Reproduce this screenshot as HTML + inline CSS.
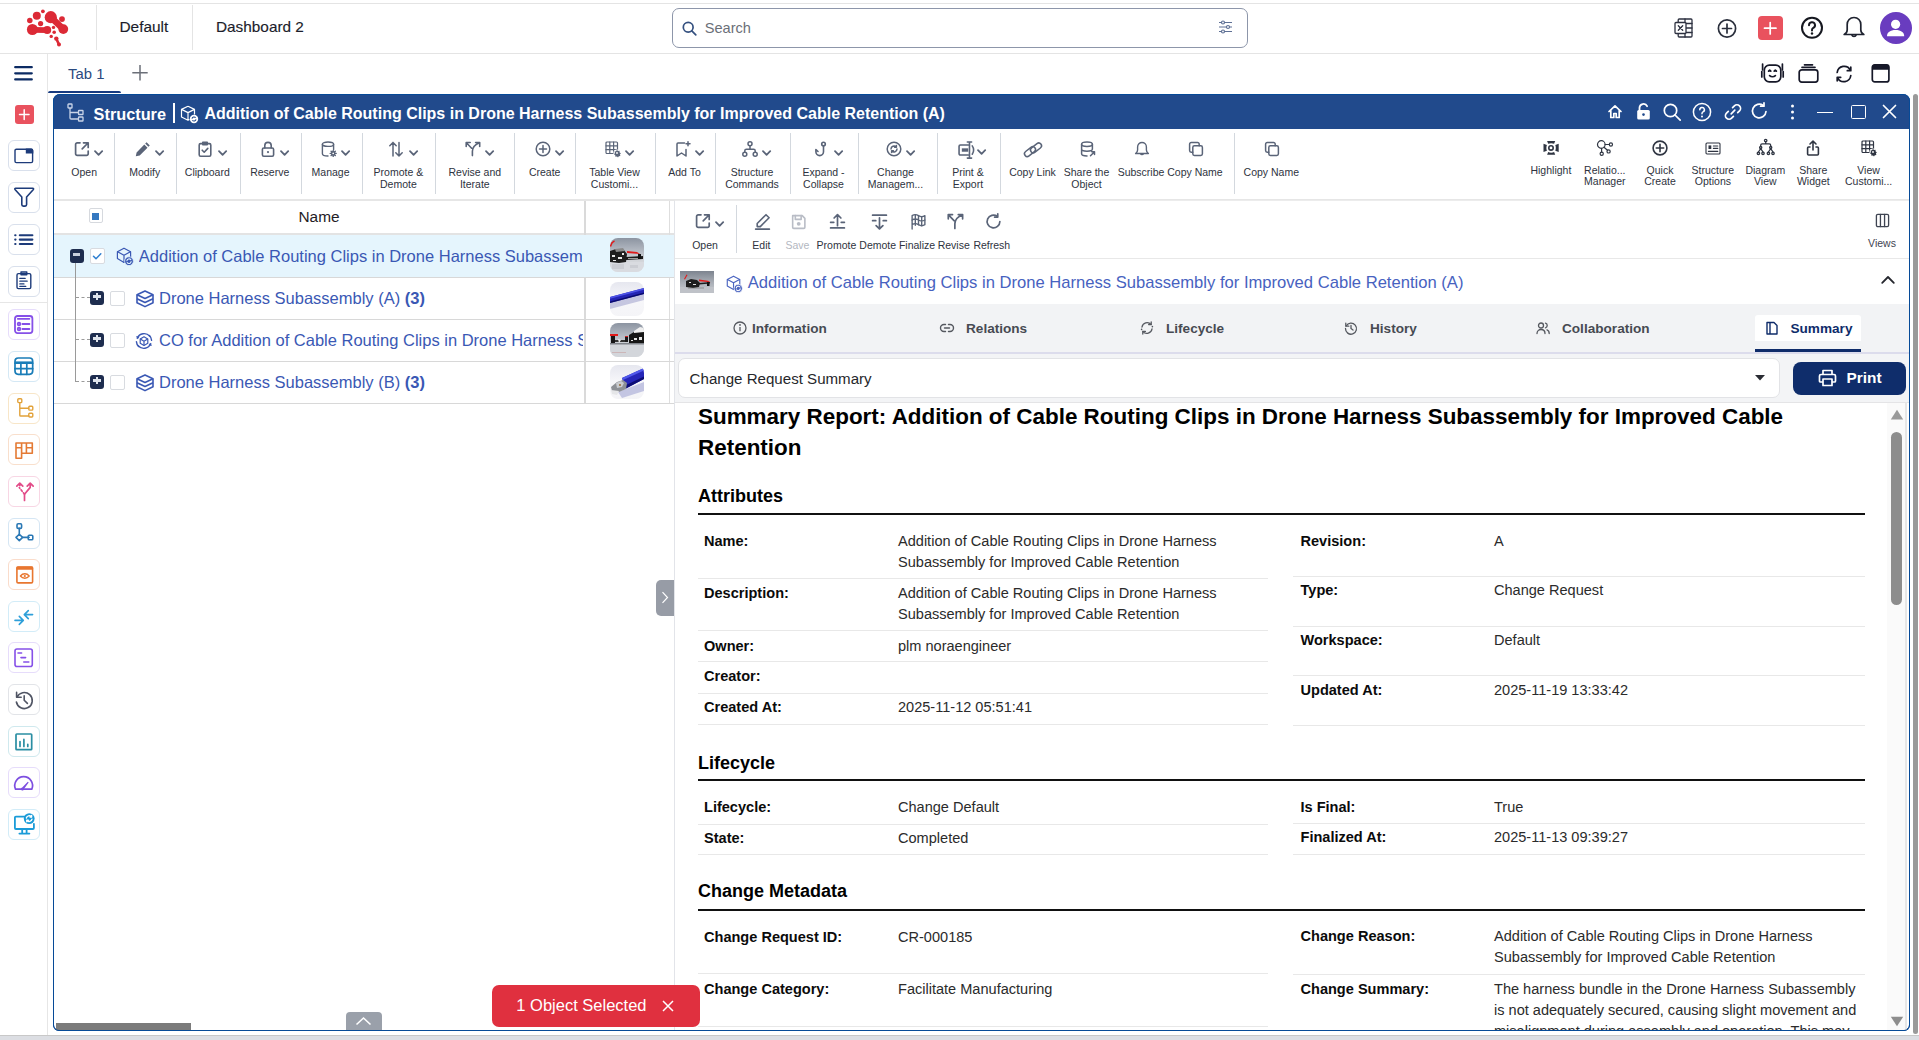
<!DOCTYPE html>
<html><head><meta charset="utf-8"><title>Structure</title>
<style>
*{box-sizing:border-box;margin:0;padding:0}
html,body{width:1919px;height:1040px;overflow:hidden;background:#fff}
body{position:relative;font-family:"Liberation Sans",sans-serif}
.t{position:absolute;line-height:1;white-space:nowrap}
.r{position:absolute;display:block}
svg.r{overflow:visible}
</style></head><body>

<div class="r" style="left:0px;top:3px;width:1919px;height:1px;background:#e4e4e4;"></div>
<div class="r" style="left:0px;top:53px;width:1919px;height:1px;background:#e4e4e4;"></div>
<svg class="r" style="left:0px;top:0px;" width="80" height="55" viewBox="0 0 80 55"><g fill="#dc2a36">
<circle cx="42.9" cy="11.3" r="1.9"/><circle cx="36.8" cy="15.7" r="4"/><circle cx="29.8" cy="20.4" r="2.75"/><circle cx="40.6" cy="23.6" r="2.6"/>
<circle cx="50.8" cy="17.2" r="6.1"/><circle cx="63.3" cy="29.1" r="4.9"/><path d="M50.8 17.2L63.3 29.1" stroke="#dc2a36" stroke-width="6.5"/>
<circle cx="62" cy="19.1" r="2.9"/>
<circle cx="32.4" cy="29.5" r="5.5"/><circle cx="47.2" cy="30.1" r="4"/><path d="M32.4 29.8L47.2 30.1" stroke="#dc2a36" stroke-width="5.8"/>
<circle cx="53.5" cy="27.4" r="1.7"/><circle cx="54.2" cy="32.2" r="1.8"/><circle cx="51.2" cy="36.4" r="1.7"/>
<circle cx="56.3" cy="38.6" r="2.2"/><circle cx="59" cy="44.5" r="2"/><path d="M56.3 38.6L59 44.5" stroke="#dc2a36" stroke-width="2.6"/>
</g></svg>
<div class="r" style="left:96px;top:5px;width:1px;height:45px;background:#e4e4e4;"></div>
<div class="r" style="left:192px;top:5px;width:1px;height:45px;background:#e4e4e4;"></div>
<div class="t" style="left:119.5px;top:18.6px;font-size:15.4px;font-weight:400;color:#1c1d2b;-webkit-text-stroke:0.15px #1c1d2b">Default</div>
<div class="t" style="left:216.0px;top:18.8px;font-size:15.35px;font-weight:400;color:#1c1d2b;-webkit-text-stroke:0.15px #1c1d2b">Dashboard 2</div>
<div class="r" style="left:672px;top:8px;width:576px;height:40px;border:1px solid #8d96aa;border-radius:7px"></div>
<svg class="r" style="left:682px;top:21px;" width="15" height="15" viewBox="0 0 15 15"><g fill="none" stroke="#34507f" stroke-width="1.7" stroke-linecap="round"><circle cx="6.2" cy="6.2" r="4.9"/><path d="M9.8 9.8l4 4"/></g></svg>
<div class="t" style="left:704.7px;top:21.1px;font-size:14.6px;font-weight:400;color:#6b6f78;">Search</div>
<svg class="r" style="left:1218px;top:20px;" width="15" height="14" viewBox="0 0 15 14"><g fill="none" stroke="#5e7095" stroke-width="1.2"><path d="M1 2.5h13M1 7h13M1 11.5h13"/><circle cx="5" cy="2.5" r="1.5" fill="#fff"/><circle cx="10" cy="7" r="1.5" fill="#fff"/><circle cx="5" cy="11.5" r="1.5" fill="#fff"/></g></svg>
<svg class="r" style="left:1674px;top:18px;" width="19" height="20" viewBox="0 0 19 20"><g fill="none" stroke="#2d3140" stroke-width="1.3" stroke-linecap="round" stroke-linejoin="round" >
<rect x="4.2" y="1" width="13.8" height="18" rx="1"/><path d="M4.2 5.5h13.8M4.2 10h13.8M4.2 14.5h13.8M11 1v18"/>
<rect x="1" y="4.5" width="11" height="11" rx="1" fill="#fff"/><path d="M4.3 7.8l4.4 4.4M8.7 7.8l-4.4 4.4"/></g></svg>
<svg class="r" style="left:1717px;top:19px;" width="20" height="20" viewBox="0 0 20 20"><g fill="none" stroke="#2a2f3c" stroke-width="1.7" stroke-linecap="round" stroke-linejoin="round" ><circle cx="10" cy="9.5" r="8.6"/><path d="M10 5v9M5.5 9.5h9"/></g></svg>
<div class="r" style="left:1758px;top:16px;width:24.5px;height:24px;background:#e9525e;border-radius:4px"></div>
<svg class="r" style="left:1758px;top:16px;" width="24" height="24" viewBox="0 0 24 24"><g fill="none" stroke="#fff" stroke-width="1.7" stroke-linecap="round" stroke-linejoin="round" ><path d="M12.2 6.5v11.5M6.5 12.2h11.5"/></g></svg>
<svg class="r" style="left:1800px;top:16px;" width="24" height="24" viewBox="0 0 24 24"><g fill="none" stroke="#161820" stroke-width="2" stroke-linecap="round" stroke-linejoin="round" ><circle cx="12" cy="11.8" r="10"/>
<path d="M9 9.2a3 3 0 1 1 4.3 2.7c-.9.5-1.3 1.1-1.3 2.1v.6"/></g><circle cx="12" cy="17.5" r="1.2" fill="#161820"/></svg>
<svg class="r" style="left:1842px;top:16px;" width="24" height="24" viewBox="0 0 24 24"><g fill="none" stroke="#1f2330" stroke-width="1.7" stroke-linecap="round" stroke-linejoin="round" ><path d="M12 1.5c-4 0-6.8 3-6.8 7v5.5c0 1.8-1.2 3.5-3 4.5h19.6c-1.8-1-3-2.7-3-4.5V8.5c0-4-2.8-7-6.8-7z"/>
<path d="M9.8 18.8a2.3 2.3 0 0 0 4.4 0"/></g></svg>
<div class="r" style="left:1880px;top:12px;width:31.5px;height:32px;background:#693cbf;border-radius:50%"></div>
<svg class="r" style="left:1880px;top:12px;" width="32" height="32" viewBox="0 0 32 32"><g fill="#fff"><circle cx="15.6" cy="12.3" r="4.6"/><path d="M7 24.2c0-3.7 3.3-6.1 8.6-6.1s8.6 2.4 8.6 6.1z"/></g></svg>
<svg class="r" style="left:1760px;top:63px;" width="25" height="20" viewBox="0 0 25 20"><g fill="none" stroke="#161828" stroke-width="1.7" stroke-linecap="round" stroke-linejoin="round" ><rect x="4.3" y="2.2" width="16.5" height="16.6" rx="5"/>
<path d="M1.8 8.5v5.5M23.2 8.5v5.5M2.6 1v6M22.4 1v6"/><path d="M8.6 8.2l1.1-1 1.1 1M14.2 8.2l1.1-1 1.1 1M9.6 12.6c1.6 1.5 4.2 1.5 5.8 0"/></g></svg>
<svg class="r" style="left:1798px;top:63px;" width="21" height="20" viewBox="0 0 21 20"><g fill="none" stroke="#161828" stroke-width="1.7" stroke-linecap="round" stroke-linejoin="round" ><rect x="1.2" y="6.8" width="18.6" height="12.3" rx="2.5"/><path d="M4 4.3h13M6.5 1.8h8"/></g></svg>
<svg class="r" style="left:1835px;top:65px;" width="18" height="18" viewBox="0 0 18 18"><g fill="none" stroke="#161828" stroke-width="1.7" stroke-linecap="round" stroke-linejoin="round" ><path d="M2.2 7.5A7 7 0 0 1 15.4 5.2M15.8 2.2v3.5h-3.5"/><path d="M15.8 10.5A7 7 0 0 1 2.6 12.8M2.2 15.8v-3.5h3.5"/></g></svg>
<svg class="r" style="left:1871px;top:63px;" width="19" height="20" viewBox="0 0 19 20"><g fill="none" stroke="#161828" stroke-width="1.7" stroke-linecap="round" stroke-linejoin="round" ><rect x="1.3" y="1.9" width="16.6" height="17" rx="2.5"/></g><path d="M1 4a2.6 2.6 0 0 1 2.6-2.6h12A2.6 2.6 0 0 1 18.2 4v2.8H1z" fill="#161828"/></svg>
<div class="r" style="left:47px;top:54px;width:1px;height:981px;background:#e6e6e6;"></div>
<div class="r" style="left:0px;top:302px;width:47px;height:1px;background:#e6e6e6;"></div>
<div class="r" style="left:8px;top:140.2px;width:31.5px;height:31px;border:1px solid #d9e0ec;border-radius:6px"></div>
<svg class="r" style="left:14.2px;top:148.4px;" width="19.8" height="15.8" viewBox="0 0 19.8 15.8"><g fill="none" stroke="#1d3b7a" stroke-width="1.4" stroke-linecap="round" stroke-linejoin="round" ><rect x="1" y="1.2" width="17.6" height="13.4" rx="1.4"/></g><path d="M11.8 0.5h5.6A1.9 1.9 0 0 1 19.3 2.4v3.2h-7.5z" fill="#1d3b7a"/></svg>
<div class="r" style="left:8px;top:182.2px;width:31.5px;height:31px;border:1px solid #d9e0ec;border-radius:6px"></div>
<svg class="r" style="left:13.9px;top:187.2px;" width="20.4" height="20.0" viewBox="0 0 20.4 20.0"><g fill="none" stroke="#1d3b7a" stroke-width="1.6" stroke-linecap="round" stroke-linejoin="round" ><path d="M1.6 1.2h17.2c.7 0 1 .8.6 1.3L12.6 10v7.6a1.5 1.5 0 0 1-1.5 1.5H9.3a1.5 1.5 0 0 1-1.5-1.5V10L1 2.5c-.4-.5-.1-1.3.6-1.3z"/></g></svg>
<div class="r" style="left:8px;top:224.2px;width:31.5px;height:31px;border:1px solid #d9e0ec;border-radius:6px"></div>
<svg class="r" style="left:14.4px;top:233.6px;" width="19.4" height="11.2" viewBox="0 0 19.4 11.2"><g stroke="#1d3b7a" stroke-width="2.1" stroke-linecap="round"><path d="M5.8 1.2h12.6M5.8 5.6h12.6M5.8 10h12.6M1.2 1.2h.3M1.2 5.6h.3M1.2 10h.3"/></g></svg>
<div class="r" style="left:8px;top:265.6px;width:31.5px;height:31px;border:1px solid #d9e0ec;border-radius:6px"></div>
<svg class="r" style="left:16.2px;top:271.2px;" width="15.8" height="18.4" viewBox="0 0 15.8 18.4"><g fill="none" stroke="#1d3b7a" stroke-width="1.4" stroke-linecap="round" stroke-linejoin="round" ><rect x="1" y="2.6" width="13.8" height="15" rx="1.4"/><path d="M5 1h5.8v2.8H5z"/><path d="M3.8 7.4h5.4M3.8 10.2h7.4M3.8 12.9h4.2M3.8 15.4h6" stroke-width="1.2"/></g></svg>
<div class="r" style="left:8px;top:309.3px;width:31.5px;height:31px;border:1px solid #e6dcfb;border-radius:6px"></div>
<svg class="r" style="left:14.4px;top:314.7px;" width="19.4" height="19.1" viewBox="0 0 19.4 19.1"><g fill="none" stroke="#8650e8" stroke-width="1.8" stroke-linecap="round" stroke-linejoin="round" ><rect x="1" y="1" width="17.4" height="17.1" rx="2.5"/><path d="M3.8 3.8h11.6M8.4 9h7M8.4 14h7"/><circle cx="5" cy="9" r="1.3"/><circle cx="5" cy="14" r="1.3"/></g></svg>
<div class="r" style="left:8px;top:351.0px;width:31.5px;height:31px;border:1px solid #d4e8f5;border-radius:6px"></div>
<svg class="r" style="left:14.3px;top:357.4px;" width="19.7" height="18.3" viewBox="0 0 19.7 18.3"><g fill="none" stroke="#1a7db8" stroke-width="1.7" stroke-linecap="round" stroke-linejoin="round" ><rect x="1" y="1" width="17.7" height="16.3" rx="3.2"/><path d="M1 6.2h17.7M1 11.7h17.7M6.9 6.2v11.1M12.8 6.2v11.1"/></g><path d="M1 5.2h17.7" stroke="#1a7db8" stroke-width="1.6"/></svg>
<div class="r" style="left:8px;top:392.6px;width:31.5px;height:31px;border:1px solid #f8e6c8;border-radius:6px"></div>
<svg class="r" style="left:16.6px;top:398.4px;" width="16.7" height="19.9" viewBox="0 0 16.7 19.9"><g fill="none" stroke="#e2a23a" stroke-width="1.4" stroke-linecap="round" stroke-linejoin="round" ><rect x=".8" y=".8" width="4" height="3.8" rx=".9"/><rect x="11.8" y="8.3" width="4" height="3.8" rx=".9"/><rect x="11.8" y="15.2" width="4" height="3.8" rx=".9"/><path d="M2.8 4.6v12.6c0 .5.3.8.8.8h8.2M2.8 10.2h9"/></g></svg>
<div class="r" style="left:8px;top:434.2px;width:31.5px;height:31px;border:1px solid #f9dfcc;border-radius:6px"></div>
<svg class="r" style="left:15px;top:441.6px;" width="18.3" height="17.0" viewBox="0 0 18.3 17.0"><g fill="none" stroke="#e47a34" stroke-width="1.6" stroke-linecap="round" stroke-linejoin="round" ><path d="M1 1h16.3v10.2H11.4V1M1 1v15.2h5.6V1M6.6 11.2h4.8M1 5.8h5.6M11.4 5.8h5.9"/></g></svg>
<div class="r" style="left:8px;top:475.9px;width:31.5px;height:31px;border:1px solid #f8d6e4;border-radius:6px"></div>
<svg class="r" style="left:16.4px;top:481.8px;" width="17.0" height="19.4" viewBox="0 0 17.0 19.4"><g fill="none" stroke="#e24b88" stroke-width="1.7" stroke-linecap="round" stroke-linejoin="round" ><path d="M8.5 18.4v-6.2L14.2 5.4M14.2 1v4.4M11.2 4.2l3-3 3 3"/><path d="M8.5 12.2L3.3 5.6" stroke-dasharray="1.8 2"/><path d="M.8 4.2l3-3 3 3M3.8 1.2v2.4"/></g></svg>
<div class="r" style="left:8px;top:517.5px;width:31.5px;height:31px;border:1px solid #d5e6f4;border-radius:6px"></div>
<svg class="r" style="left:14.4px;top:523.2px;" width="19.3" height="18.0" viewBox="0 0 19.3 18.0"><g fill="none" stroke="#2a78b5" stroke-width="1.6" stroke-linecap="round" stroke-linejoin="round" ><rect x="3" y=".8" width="4.6" height="4.6" rx="1.1"/><path d="M5.3 5.4v6.5M8.6 14.4h6.5"/><path d="M5.3 11.2l3.3 3.2-3.3 3.2-3.3-3.2z"/><rect x="14.2" y="12.2" width="4.6" height="4.6" rx="1.1"/></g></svg>
<div class="r" style="left:8px;top:559.1px;width:31.5px;height:31px;border:1px solid #fadccb;border-radius:6px"></div>
<svg class="r" style="left:15.5px;top:565.6px;" width="17.5" height="17.7" viewBox="0 0 17.5 17.7"><g fill="none" stroke="#e8762f" stroke-width="1.6" stroke-linecap="round" stroke-linejoin="round" ><rect x=".9" y="1" width="15.7" height="15.9" rx="1.2"/></g><rect x=".4" y=".5" width="16.7" height="3.2" rx="1" fill="#e8762f"/><g fill="none" stroke="#e8762f" stroke-width="1.3" stroke-linecap="round" stroke-linejoin="round" ><path d="M4.4 10c2.4-3 6.4-3 8.8 0-2.4 3-6.4 3-8.8 0z"/></g><circle cx="8.8" cy="10" r="1.1" fill="#e8762f"/></svg>
<div class="r" style="left:8px;top:600.7px;width:31.5px;height:31px;border:1px solid #d2ecf8;border-radius:6px"></div>
<svg class="r" style="left:14.4px;top:609.6px;" width="19.6" height="15.0" viewBox="0 0 19.6 15.0"><g fill="none" stroke="#2e9fd9" stroke-width="1.6" stroke-linecap="round" stroke-linejoin="round" ><path d="M1 10.4h8.2M5.3 6.4l4 4-4 4M18.6 4.6h-8.2M14.3 .6l-4 4 4 4"/></g></svg>
<div class="r" style="left:8px;top:642.3px;width:31.5px;height:31px;border:1px solid #e6dcfb;border-radius:6px"></div>
<svg class="r" style="left:14.4px;top:648px;" width="19.3" height="19.5" viewBox="0 0 19.3 19.5"><g fill="none" stroke="#8650e8" stroke-width="1.6" stroke-linecap="round" stroke-linejoin="round" ><rect x="1" y="1" width="17.3" height="17.5" rx="2"/><path d="M4 5h3.6M7 9.6h4.6M9.8 14h5"/></g></svg>
<div class="r" style="left:8px;top:684.0px;width:31.5px;height:31px;border:1px solid #e2e4e8;border-radius:6px"></div>
<svg class="r" style="left:15.4px;top:691px;" width="17.7" height="17.7" viewBox="0 0 17.7 17.7"><g fill="none" stroke="#505564" stroke-width="1.6" stroke-linecap="round" stroke-linejoin="round" ><path d="M2 6.2A8 8 0 1 1 1.4 11"/><path d="M1.6 1.4v4.8h4.6"/><path d="M9.2 4.8v4.4l3.2 3.2"/></g></svg>
<div class="r" style="left:8px;top:725.6px;width:31.5px;height:31px;border:1px solid #cfe9ee;border-radius:6px"></div>
<svg class="r" style="left:15.4px;top:732.5px;" width="17.7" height="17.7" viewBox="0 0 17.7 17.7"><g fill="none" stroke="#2a8ea3" stroke-width="1.7" stroke-linecap="round" stroke-linejoin="round" ><rect x="1" y="1" width="15.7" height="15.7" rx=".8"/><path d="M5 8.5v5M8.9 6.4v7.1M12.8 11.4v2.1"/></g></svg>
<div class="r" style="left:8px;top:767.2px;width:31.5px;height:31px;border:1px solid #e6dcfb;border-radius:6px"></div>
<svg class="r" style="left:14.4px;top:776.2px;" width="19.3" height="14.2" viewBox="0 0 19.3 14.2"><g fill="none" stroke="#7d4fe0" stroke-width="1.7" stroke-linecap="round" stroke-linejoin="round" ><path d="M1.5 13.2A8.9 8.9 0 1 1 17.8 13.2z"/></g><path d="M8.2 11.4l5.6-5.6.9.8-4.6 6.2a1.6 1.6 0 1 1-1.9-1.4z" fill="#7d4fe0"/></svg>
<div class="r" style="left:8px;top:808.8px;width:31.5px;height:31px;border:1px solid #d2ecf8;border-radius:6px"></div>
<svg class="r" style="left:13.8px;top:813.2px;" width="20.9" height="22.2" viewBox="0 0 20.9 22.2"><g fill="none" stroke="#1a9bd8" stroke-width="1.8" stroke-linecap="round" stroke-linejoin="round" ><path d="M11 3.6H1.9a1 1 0 0 0-1 1V15a1 1 0 0 0 1 1h17a1 1 0 0 0 1-1v-4.2M5.4 20.6h10M8.2 16v4.6M12.6 16v4.6"/></g><circle cx="15.2" cy="5.6" r="5.4" fill="#1a9bd8"/><g fill="none" stroke="#fff" stroke-width="1.4" stroke-linecap="round" stroke-linejoin="round" ><path d="M12.4 5a2.9 2.9 0 0 1 5-1.3M18 6.2a2.9 2.9 0 0 1-5 1.3"/><path d="M17.6 2.4v1.6h-1.6M12.8 8.8V7.2h1.6"/></g></svg>
<div class="r" style="left:15px;top:105px;width:18.5px;height:19px;background:#e9525e;border-radius:3px"></div>
<svg class="r" style="left:15px;top:105px;" width="18" height="19" viewBox="0 0 18 19"><g fill="none" stroke="#fff" stroke-width="1.5" stroke-linecap="round" stroke-linejoin="round" ><path d="M9.2 4.8v9.6M4.5 9.6h9.5"/></g></svg>
<svg class="r" style="left:14px;top:66px;" width="19" height="15" viewBox="0 0 19 15"><g stroke="#0c2b63" stroke-width="2.2" stroke-linecap="round"><path d="M1.2 1.2h16.6M1.2 7.3h16.6M1.2 13.4h16.6"/></g></svg>
<div class="t" style="left:68.0px;top:67.2px;font-size:14.9px;font-weight:400;color:#2b4a7f;">Tab 1</div>
<div class="r" style="left:48px;top:91px;width:72.5px;height:2px;background:#163a80;border-radius:2px 2px 0 0"></div>
<svg class="r" style="left:132px;top:64.5px;" width="16" height="16" viewBox="0 0 16 16"><g stroke="#6b6f78" stroke-width="1.5"><path d="M8 0v15.5M0.3 7.8h15.4"/></g></svg>
<div class="r" style="left:53px;top:94px;width:1857px;height:937px;border:1px solid #2354a0;border-top:0;border-radius:7px 7px 6px 6px;overflow:hidden;background:#fff">
</div>
<div class="r" style="left:53px;top:94px;width:1857px;height:35px;background:#214a8c;border-radius:7px 7px 0 0"></div>
<svg class="r" style="left:67px;top:103px;" width="17" height="19" viewBox="0 0 17 19"><g fill="none" stroke="#c9d4e8" stroke-width="1.3"><rect x="1" y="1" width="4" height="4" rx=".6"/><rect x="11.5" y="7.5" width="4.5" height="4" rx=".6"/><rect x="11.5" y="14" width="4.5" height="4" rx=".6"/><path d="M3 5v10c0 .8.6 1 1.2 1h7.3M3 9.5h8.5"/></g></svg>
<div class="t" style="left:93.6px;top:106.0px;font-size:16.3px;font-weight:700;color:#fff;">Structure</div>
<div class="r" style="left:172.8px;top:103.3px;width:2.6px;height:19.6px;background:#fff;"></div>
<svg class="r" style="left:180px;top:105px;" width="19" height="19" viewBox="0 0 19 19"><g fill="none" stroke="#fff" stroke-width="1.2" stroke-linejoin="round"><path d="M8 1.2l6.5 3.2v5.2M8 1.2L1.5 4.4v7.6L8 15.2l1.5-.7M1.5 4.4L8 7.6l6.5-3.2M8 7.6v7.6"/></g><circle cx="14" cy="14" r="4.2" fill="#fff"/><g fill="none" stroke="#214a8c" stroke-width="1.1"><path d="M12 13.6a2 2 0 0 1 3.6-.8M16 14.4a2 2 0 0 1-3.6.8"/></g></svg>
<div class="t" style="left:204.4px;top:106.3px;font-size:16px;font-weight:700;color:#fff;">Addition of Cable Routing Clips in Drone Harness Subassembly for Improved Cable Retention (A)</div>
<svg class="r" style="left:1607px;top:104px;" width="16" height="15" viewBox="0 0 16 15"><g fill="none" stroke="#fff" stroke-width="1.7" stroke-linecap="round" stroke-linejoin="round"><path d="M2 7.5L8 1.8l6 5.7M3.8 6v7.5h3v-4h2.4v4h3V6"/></g></svg>
<svg class="r" style="left:1636px;top:103px;" width="15" height="17" viewBox="0 0 15 17"><path d="M3.5 7V4.8a4 4 0 0 1 7.6-1.6" fill="none" stroke="#fff" stroke-width="1.8" stroke-linecap="round"/><rect x="1.2" y="7" width="12.6" height="9.5" rx="1.5" fill="#fff"/><circle cx="7.5" cy="11.6" r="1.3" fill="#214a8c"/></svg>
<svg class="r" style="left:1663px;top:103px;" width="19" height="18" viewBox="0 0 19 18"><g fill="none" stroke="#fff" stroke-width="1.7" stroke-linecap="round" stroke-linejoin="round"><circle cx="7.5" cy="7.5" r="6.2"/><path d="M12 12l5.2 5.2"/></g></svg>
<svg class="r" style="left:1692px;top:102px;" width="20" height="20" viewBox="0 0 20 20"><g fill="none" stroke="#fff" stroke-width="1.5" stroke-linecap="round"><circle cx="10" cy="10" r="8.6"/><path d="M7.8 7.8a2.3 2.3 0 1 1 3.2 2.1c-.6.3-1 .8-1 1.5v.4"/></g><circle cx="10" cy="14.5" r="1" fill="#fff"/></svg>
<svg class="r" style="left:1723px;top:103px;" width="20" height="18" viewBox="0 0 20 18"><g fill="none" stroke="#fff" stroke-width="1.7" stroke-linecap="round" stroke-linejoin="round"><path d="M8.2 10.8l3.6-3.6"/><path d="M9.6 4.6l1.8-1.8a3.6 3.6 0 0 1 5.1 5.1l-1.8 1.8"/><path d="M10.4 13.4l-1.8 1.8a3.6 3.6 0 0 1-5.1-5.1l1.8-1.8"/></g></svg>
<svg class="r" style="left:1751px;top:102px;" width="17" height="18" viewBox="0 0 17 18"><g fill="none" stroke="#fff" stroke-width="1.7" stroke-linecap="round" stroke-linejoin="round"><path d="M15 9.5A6.8 6.8 0 1 1 12.2 3.5"/><path d="M13 .8v3.4h-3.4"/></g></svg>
<svg class="r" style="left:1790px;top:104px;" width="5" height="16" viewBox="0 0 5 16"><g fill="#fff"><circle cx="2.5" cy="2" r="1.5"/><circle cx="2.5" cy="8" r="1.5"/><circle cx="2.5" cy="14" r="1.5"/></g></svg>
<div class="r" style="left:1817px;top:111.5px;width:16px;height:1.8px;background:#fff;"></div>
<div class="r" style="left:1851px;top:105px;width:14.5px;height:14px;border:1.8px solid #fff;border-radius:1.5px"></div>
<svg class="r" style="left:1882px;top:104px;" width="15" height="15" viewBox="0 0 15 15"><g fill="none" stroke="#fff" stroke-width="1.7" stroke-linecap="round" stroke-linejoin="round"><path d="M1.5 1.5l12 12M13.5 1.5l-12 12"/></g></svg>
<div class="r" style="left:54px;top:198.5px;width:1855px;height:2.2px;background:#e6e6e6;"></div>
<div class="r" style="left:114.4px;top:133px;width:1px;height:60.6px;background:#d3d8de;"></div>
<div class="r" style="left:175.5px;top:133px;width:1px;height:60.6px;background:#d3d8de;"></div>
<div class="r" style="left:239.5px;top:133px;width:1px;height:60.6px;background:#d3d8de;"></div>
<div class="r" style="left:300.6px;top:133px;width:1px;height:60.6px;background:#d3d8de;"></div>
<div class="r" style="left:361.5px;top:133px;width:1px;height:60.6px;background:#d3d8de;"></div>
<div class="r" style="left:435.4px;top:133px;width:1px;height:60.6px;background:#d3d8de;"></div>
<div class="r" style="left:514.3px;top:133px;width:1px;height:60.6px;background:#d3d8de;"></div>
<div class="r" style="left:575.4px;top:133px;width:1px;height:60.6px;background:#d3d8de;"></div>
<div class="r" style="left:654.5px;top:133px;width:1px;height:60.6px;background:#d3d8de;"></div>
<div class="r" style="left:714.5px;top:133px;width:1px;height:60.6px;background:#d3d8de;"></div>
<div class="r" style="left:789.5px;top:133px;width:1px;height:60.6px;background:#d3d8de;"></div>
<div class="r" style="left:857.5px;top:133px;width:1px;height:60.6px;background:#d3d8de;"></div>
<div class="r" style="left:936.7px;top:133px;width:1px;height:60.6px;background:#d3d8de;"></div>
<div class="r" style="left:999.5px;top:133px;width:1px;height:60.6px;background:#d3d8de;"></div>
<div class="r" style="left:1234.4px;top:133px;width:1px;height:60.6px;background:#d3d8de;"></div>
<div class="r" style="left:44.2px;top:166.1px;width:80px;text-align:center;font-size:10.5px;line-height:12.1px;color:#2e3340;white-space:nowrap">Open</div>
<svg class="r" style="left:74.2px;top:141px;" width="16" height="16" viewBox="0 0 16 16"><g fill="none" stroke="#5a6478" stroke-width="1.7" stroke-linecap="round" stroke-linejoin="round"><path d="M6 1.8H3.2A1.6 1.6 0 0 0 1.6 3.4v9.4a1.6 1.6 0 0 0 1.6 1.6h9.4a1.6 1.6 0 0 0 1.6-1.6V10"/><path d="M9.5 1.8h4.7v4.7M14 2L8.2 7.8"/></g></svg>
<svg class="r" style="left:94.4px;top:149.5px;" width="9.2" height="6" viewBox="0 0 9.2 6"><path d="M1 1.2l3.6 3.6L8.2 1.2" fill="none" stroke="#5a6478" stroke-width="1.8" stroke-linecap="round" stroke-linejoin="round"/></svg>
<div class="r" style="left:104.7px;top:166.1px;width:80px;text-align:center;font-size:10.5px;line-height:12.1px;color:#2e3340;white-space:nowrap">Modify</div>
<svg class="r" style="left:134.7px;top:141px;" width="16" height="16" viewBox="0 0 16 16"><path d="M11.6 1.2l3.2 3.2-1.4 1.4-3.2-3.2zM9.3 3.5l3.2 3.2-7.8 7.8-3.9.8.8-3.9z" fill="#5a6478"/></svg>
<svg class="r" style="left:154.89999999999998px;top:149.5px;" width="9.2" height="6" viewBox="0 0 9.2 6"><path d="M1 1.2l3.6 3.6L8.2 1.2" fill="none" stroke="#5a6478" stroke-width="1.8" stroke-linecap="round" stroke-linejoin="round"/></svg>
<div class="r" style="left:167.3px;top:166.1px;width:80px;text-align:center;font-size:10.5px;line-height:12.1px;color:#2e3340;white-space:nowrap">Clipboard</div>
<svg class="r" style="left:197.3px;top:141px;" width="16" height="16" viewBox="0 0 16 16"><g fill="none" stroke="#5a6478" stroke-width="1.6" stroke-linecap="round" stroke-linejoin="round"><rect x="2.2" y="2.6" width="11.6" height="12.6" rx="1.4"/><path d="M5.8 1.2h4.4v2.6H5.8z"/><path d="M5.2 9.2l2 2 3.6-3.8"/></g></svg>
<svg class="r" style="left:217.5px;top:149.5px;" width="9.2" height="6" viewBox="0 0 9.2 6"><path d="M1 1.2l3.6 3.6L8.2 1.2" fill="none" stroke="#5a6478" stroke-width="1.8" stroke-linecap="round" stroke-linejoin="round"/></svg>
<div class="r" style="left:229.7px;top:166.1px;width:80px;text-align:center;font-size:10.5px;line-height:12.1px;color:#2e3340;white-space:nowrap">Reserve</div>
<svg class="r" style="left:259.7px;top:141px;" width="16" height="16" viewBox="0 0 16 16"><g fill="none" stroke="#5a6478" stroke-width="1.6" stroke-linecap="round" stroke-linejoin="round"><rect x="2.4" y="7" width="11.2" height="8.2" rx="1.4"/><path d="M4.8 7V4.6a3.2 3.2 0 0 1 6.4 0V7"/></g><circle cx="8" cy="11.1" r="1.1" fill="#5a6478"/></svg>
<svg class="r" style="left:279.9px;top:149.5px;" width="9.2" height="6" viewBox="0 0 9.2 6"><path d="M1 1.2l3.6 3.6L8.2 1.2" fill="none" stroke="#5a6478" stroke-width="1.8" stroke-linecap="round" stroke-linejoin="round"/></svg>
<div class="r" style="left:290.6px;top:166.1px;width:80px;text-align:center;font-size:10.5px;line-height:12.1px;color:#2e3340;white-space:nowrap">Manage</div>
<svg class="r" style="left:320.6px;top:141px;" width="16" height="16" viewBox="0 0 16 16"><g fill="none" stroke="#5a6478" stroke-width="1.4" stroke-linecap="round" stroke-linejoin="round"><ellipse cx="7" cy="3.2" rx="5.6" ry="2.2"/><path d="M1.4 3.2v9.6c0 1.2 2.5 2.2 5.6 2.2M12.6 3.2v5.3"/><circle cx="12.2" cy="12.4" r="1.6"/><path d="M12.2 9.4v1.2M12.2 14.2v1.2M9.2 12.4h1.2M14 12.4h1.2M10.1 10.3l.8.8M13.5 13.7l.8.8M14.3 10.3l-.8.8M10.9 13.7l-.8.8"/></g></svg>
<svg class="r" style="left:340.8px;top:149.5px;" width="9.2" height="6" viewBox="0 0 9.2 6"><path d="M1 1.2l3.6 3.6L8.2 1.2" fill="none" stroke="#5a6478" stroke-width="1.8" stroke-linecap="round" stroke-linejoin="round"/></svg>
<div class="r" style="left:358.4px;top:166.1px;width:80px;text-align:center;font-size:10.5px;line-height:12.1px;color:#2e3340;white-space:nowrap">Promote &amp;<br>Demote</div>
<svg class="r" style="left:388.4px;top:141px;" width="16" height="16" viewBox="0 0 16 16"><g fill="none" stroke="#5a6478" stroke-width="1.5" stroke-linecap="round" stroke-linejoin="round"><path d="M5 15V1.5M1.8 4.8L5 1.5l3.2 3.3M11 1.5V15M7.8 11.7L11 15l3.2-3.3"/></g></svg>
<svg class="r" style="left:408.59999999999997px;top:149.5px;" width="9.2" height="6" viewBox="0 0 9.2 6"><path d="M1 1.2l3.6 3.6L8.2 1.2" fill="none" stroke="#5a6478" stroke-width="1.8" stroke-linecap="round" stroke-linejoin="round"/></svg>
<div class="r" style="left:434.8px;top:166.1px;width:80px;text-align:center;font-size:10.5px;line-height:12.1px;color:#2e3340;white-space:nowrap">Revise and<br>Iterate</div>
<svg class="r" style="left:464.8px;top:141px;" width="16" height="16" viewBox="0 0 16 16"><g fill="none" stroke="#5a6478" stroke-width="1.6" stroke-linecap="round" stroke-linejoin="round"><path d="M1.2 5.5V1.5h4M1.4 1.7L6.6 7.2M7.4 14.6V10.2C7.4 6 10 3.6 14.4 1.7M10.6 1.5h4.1v4"/></g></svg>
<svg class="r" style="left:485.0px;top:149.5px;" width="9.2" height="6" viewBox="0 0 9.2 6"><path d="M1 1.2l3.6 3.6L8.2 1.2" fill="none" stroke="#5a6478" stroke-width="1.8" stroke-linecap="round" stroke-linejoin="round"/></svg>
<div class="r" style="left:504.7px;top:166.1px;width:80px;text-align:center;font-size:10.5px;line-height:12.1px;color:#2e3340;white-space:nowrap">Create</div>
<svg class="r" style="left:534.7px;top:141px;" width="16" height="16" viewBox="0 0 16 16"><g fill="none" stroke="#5a6478" stroke-width="1.5" stroke-linecap="round" stroke-linejoin="round"><circle cx="8" cy="8" r="6.8"/><path d="M8 4.5v7M4.5 8h7"/></g></svg>
<svg class="r" style="left:554.9000000000001px;top:149.5px;" width="9.2" height="6" viewBox="0 0 9.2 6"><path d="M1 1.2l3.6 3.6L8.2 1.2" fill="none" stroke="#5a6478" stroke-width="1.8" stroke-linecap="round" stroke-linejoin="round"/></svg>
<div class="r" style="left:574.5px;top:166.1px;width:80px;text-align:center;font-size:10.5px;line-height:12.1px;color:#2e3340;white-space:nowrap">Table View<br>Customi...</div>
<svg class="r" style="left:604.5px;top:141px;" width="16" height="16" viewBox="0 0 16 16"><g fill="none" stroke="#5a6478" stroke-width="1.2" stroke-linecap="round" stroke-linejoin="round"><rect x="1" y="1" width="11.5" height="11.5" rx="1"/><path d="M1 4.8h11.5M1 8.6h11.5M4.8 1v11.5M8.6 1v11.5"/></g><circle cx="12" cy="12" r="3.6" fill="#fff"/><path d="M12 8.8l.9 1.3 1.6-.3.1 1.6 1.3.9-1 1.2.5 1.5-1.6.3-.8 1.3-1-1.1-1.6.3-.1-1.6-1.3-.9 1-1.2-.5-1.5 1.6-.3z" fill="#5a6478"/><circle cx="12" cy="12" r=".9" fill="#fff"/></svg>
<svg class="r" style="left:624.7px;top:149.5px;" width="9.2" height="6" viewBox="0 0 9.2 6"><path d="M1 1.2l3.6 3.6L8.2 1.2" fill="none" stroke="#5a6478" stroke-width="1.8" stroke-linecap="round" stroke-linejoin="round"/></svg>
<div class="r" style="left:644.5px;top:166.1px;width:80px;text-align:center;font-size:10.5px;line-height:12.1px;color:#2e3340;white-space:nowrap">Add To</div>
<svg class="r" style="left:674.5px;top:141px;" width="16" height="16" viewBox="0 0 16 16"><g fill="none" stroke="#5a6478" stroke-width="1.5" stroke-linecap="round" stroke-linejoin="round"><path d="M9.5 2H3a1 1 0 0 0-1 1v12l4.5-3L11 15V8.5"/><path d="M13 .8v4M11 2.8h4"/></g></svg>
<svg class="r" style="left:694.7px;top:149.5px;" width="9.2" height="6" viewBox="0 0 9.2 6"><path d="M1 1.2l3.6 3.6L8.2 1.2" fill="none" stroke="#5a6478" stroke-width="1.8" stroke-linecap="round" stroke-linejoin="round"/></svg>
<div class="r" style="left:712.0px;top:166.1px;width:80px;text-align:center;font-size:10.5px;line-height:12.1px;color:#2e3340;white-space:nowrap">Structure<br>Commands</div>
<svg class="r" style="left:742px;top:141px;" width="16" height="16" viewBox="0 0 16 16"><g fill="none" stroke="#5a6478" stroke-width="1.5" stroke-linecap="round" stroke-linejoin="round"><circle cx="8" cy="2.8" r="2"/><circle cx="2.8" cy="13.2" r="2"/><circle cx="13.2" cy="13.2" r="2"/><path d="M8 4.8v3.4M2.8 11.2V9.8c0-.9.7-1.6 1.6-1.6h7.2c.9 0 1.6.7 1.6 1.6v1.4"/></g></svg>
<svg class="r" style="left:762.2px;top:149.5px;" width="9.2" height="6" viewBox="0 0 9.2 6"><path d="M1 1.2l3.6 3.6L8.2 1.2" fill="none" stroke="#5a6478" stroke-width="1.8" stroke-linecap="round" stroke-linejoin="round"/></svg>
<div class="r" style="left:783.5px;top:166.1px;width:80px;text-align:center;font-size:10.5px;line-height:12.1px;color:#2e3340;white-space:nowrap">Expand -<br>Collapse</div>
<svg class="r" style="left:813.5px;top:141px;" width="16" height="16" viewBox="0 0 16 16"><g fill="none" stroke="#5a6478" stroke-width="1.6" stroke-linecap="round" stroke-linejoin="round"><circle cx="9.5" cy="3" r="1.8"/><path d="M9.5 4.8v6a3.8 3.8 0 0 1-7.6 0V8.5L4 10.5"/></g></svg>
<svg class="r" style="left:833.7px;top:149.5px;" width="9.2" height="6" viewBox="0 0 9.2 6"><path d="M1 1.2l3.6 3.6L8.2 1.2" fill="none" stroke="#5a6478" stroke-width="1.8" stroke-linecap="round" stroke-linejoin="round"/></svg>
<div class="r" style="left:855.5px;top:166.1px;width:80px;text-align:center;font-size:10.5px;line-height:12.1px;color:#2e3340;white-space:nowrap">Change<br>Managem...</div>
<svg class="r" style="left:885.5px;top:141px;" width="16" height="16" viewBox="0 0 16 16"><g fill="none" stroke="#5a6478" stroke-width="1.5" stroke-linecap="round" stroke-linejoin="round"><circle cx="8" cy="8" r="6.8"/><path d="M5 8a3 3 0 0 1 5.2-2M10.4 4.4v1.8H8.6M11 8a3 3 0 0 1-5.2 2M5.6 11.6V9.8h1.8"/></g></svg>
<svg class="r" style="left:905.7px;top:149.5px;" width="9.2" height="6" viewBox="0 0 9.2 6"><path d="M1 1.2l3.6 3.6L8.2 1.2" fill="none" stroke="#5a6478" stroke-width="1.8" stroke-linecap="round" stroke-linejoin="round"/></svg>
<div class="r" style="left:927.9px;top:166.1px;width:80px;text-align:center;font-size:10.5px;line-height:12.1px;color:#2e3340;white-space:nowrap">Print &amp;<br>Export</div>
<svg class="r" style="left:957.9px;top:140.6px;" width="17" height="17" viewBox="0 0 16 16"><g fill="none" stroke="#5a6478" stroke-width="1.5" stroke-linecap="round" stroke-linejoin="round"><path d="M9.6 3.8H2.2a1.2 1.2 0 0 0-1.2 1.2v7a1.2 1.2 0 0 0 1.2 1.2h7.4M13.4 4.6c.9 1.2 1.3 2.5 1.3 3.9s-.4 2.7-1.3 3.9M10.8 .9v15.2M8.8 .9h4M8.8 16.1h4"/></g><rect x="3.6" y="6.9" width="6" height="3.2" fill="#5a6478"/></svg>
<svg class="r" style="left:977.0px;top:149.3px;" width="9.2" height="6" viewBox="0 0 9.2 6"><path d="M1 1.2l3.6 3.6L8.2 1.2" fill="none" stroke="#5a6478" stroke-width="1.8" stroke-linecap="round" stroke-linejoin="round"/></svg>
<div class="r" style="left:992.5px;top:166.1px;width:80px;text-align:center;font-size:10.5px;line-height:12.1px;color:#2e3340;white-space:nowrap">Copy Link</div>
<svg class="r" style="left:1023px;top:141.5px;" width="20" height="15.5" viewBox="0 0 20 15.5"><g fill="none" stroke="#5a6478" stroke-width="1.5" stroke-linecap="round" stroke-linejoin="round"><rect x="-6.2" y="-2.8" width="12.4" height="5.6" rx="2.8" transform="translate(7 9.6) rotate(-38)"/><rect x="-6.2" y="-2.8" width="12.4" height="5.6" rx="2.8" transform="translate(13 5.9) rotate(-38)"/></g></svg>
<div class="r" style="left:1046.5px;top:166.1px;width:80px;text-align:center;font-size:10.5px;line-height:12.1px;color:#2e3340;white-space:nowrap">Share the<br>Object</div>
<svg class="r" style="left:1079.5px;top:141px;" width="16" height="16" viewBox="0 0 16 16"><g fill="none" stroke="#5a6478" stroke-width="1.5" stroke-linecap="round" stroke-linejoin="round"><ellipse cx="7" cy="3.2" rx="5.4" ry="2.2"/><path d="M1.6 3.2v9.6c0 1.2 2.4 2.2 5.4 2.2M12.4 3.2v5M1.6 8c0 1.2 2.4 2.2 5.4 2.2s5.4-1 5.4-2.2M10.5 14.8l4-4M11.8 10.8h2.7v2.7"/></g></svg>
<div class="r" style="left:1101.0px;top:166.1px;width:80px;text-align:center;font-size:10.5px;line-height:12.1px;color:#2e3340;white-space:nowrap">Subscribe</div>
<svg class="r" style="left:1134px;top:141px;" width="16" height="16" viewBox="0 0 16 16"><g fill="none" stroke="#5a6478" stroke-width="1.4" stroke-linecap="round" stroke-linejoin="round"><path d="M8 1.5a4.4 4.4 0 0 0-4.4 4.4v3.2c0 1.4-.8 2.6-2 3.4h12.8c-1.2-.8-2-2-2-3.4V5.9A4.4 4.4 0 0 0 8 1.5z"/><path d="M6.5 12.6a1.6 1.6 0 0 0 3 0"/></g></svg>
<div class="r" style="left:1155.0px;top:166.1px;width:80px;text-align:center;font-size:10.5px;line-height:12.1px;color:#2e3340;white-space:nowrap">Copy Name</div>
<svg class="r" style="left:1188px;top:141px;" width="16" height="16" viewBox="0 0 16 16"><g fill="none" stroke="#5a6478" stroke-width="1.5" stroke-linecap="round" stroke-linejoin="round"><rect x="4.8" y="4.8" width="9.6" height="9.6" rx="1.6"/><path d="M11.2 4.8V3.2a1.6 1.6 0 0 0-1.6-1.6H3.2a1.6 1.6 0 0 0-1.6 1.6v6.4a1.6 1.6 0 0 0 1.6 1.6h1.6"/></g></svg>
<div class="r" style="left:1231.3px;top:166.1px;width:80px;text-align:center;font-size:10.5px;line-height:12.1px;color:#2e3340;white-space:nowrap">Copy Name</div>
<svg class="r" style="left:1264.3px;top:141px;" width="16" height="16" viewBox="0 0 16 16"><g fill="none" stroke="#5a6478" stroke-width="1.5" stroke-linecap="round" stroke-linejoin="round"><rect x="4.8" y="4.8" width="9.6" height="9.6" rx="1.6"/><path d="M11.2 4.8V3.2a1.6 1.6 0 0 0-1.6-1.6H3.2a1.6 1.6 0 0 0-1.6 1.6v6.4a1.6 1.6 0 0 0 1.6 1.6h1.6"/></g></svg>
<div class="r" style="left:1510.9px;top:164.7px;width:80px;text-align:center;font-size:10.5px;line-height:11.7px;color:#2e3340;white-space:nowrap">Highlight</div>
<svg class="r" style="left:1542.9px;top:140px;" width="16" height="16" viewBox="0 0 16 16"><g fill="#2f3542" transform="translate(0.3 1)"><path d="M3.8 0h8.1l-1.1 2.8c-1.9-.9-4-.9-5.9 0z"/><path d="M3.8 13.8h8.1l-1.1-2.8c-1.9.9-4 .9-5.9 0z"/><path d="M0.2 2.8l3.4 1.2c-.7 1.9-.7 3.9 0 5.8L0.2 11z"/><path d="M15.4 2.8l-3.4 1.2c.7 1.9.7 3.9 0 5.8l3.4 1.2z"/></g><circle cx="8" cy="7.9" r="2.2" fill="none" stroke="#2f3542" stroke-width="1.6"/></svg>
<div class="r" style="left:1564.8px;top:164.7px;width:80px;text-align:center;font-size:10.5px;line-height:11.7px;color:#2e3340;white-space:nowrap">Relatio...<br>Manager</div>
<svg class="r" style="left:1596.8px;top:140px;" width="16" height="16" viewBox="0 0 16 16"><g fill="none" stroke="#2f3542" stroke-width="1.2" stroke-linecap="round" stroke-linejoin="round"><circle cx="4.3" cy="4.5" r="3.8"/><circle cx="13.9" cy="4.5" r="1.6"/><circle cx="11.6" cy="11.4" r="1.6"/><circle cx="4.7" cy="13.7" r="1.6"/><path d="M8.1 4.5h4.2M7 7.2l3.5 3.1M4.6 8.3v3.8"/></g></svg>
<div class="r" style="left:1620.0px;top:164.7px;width:80px;text-align:center;font-size:10.5px;line-height:11.7px;color:#2e3340;white-space:nowrap">Quick<br>Create</div>
<svg class="r" style="left:1652px;top:140px;" width="16" height="16" viewBox="0 0 16 16"><g fill="none" stroke="#2f3542" stroke-width="1.6" stroke-linecap="round" stroke-linejoin="round"><circle cx="8" cy="8" r="6.9"/><path d="M8 4.3v7.4M4.3 8h7.4"/></g></svg>
<div class="r" style="left:1672.9px;top:164.7px;width:80px;text-align:center;font-size:10.5px;line-height:11.7px;color:#2e3340;white-space:nowrap">Structure<br>Options</div>
<svg class="r" style="left:1704.9px;top:140px;" width="16" height="16" viewBox="0 0 16 16"><g fill="none" stroke="#2f3542" stroke-width="1.1" stroke-linecap="round" stroke-linejoin="round"><rect x="1" y="3" width="14" height="11" rx="1"/><path d="M8.4 6h4.4M8.4 8.4h4.4M3.4 11.4h9.4"/></g><rect x="3.5" y="5.4" width="2.8" height="3.6" fill="#2f3542"/></svg>
<div class="r" style="left:1725.3px;top:164.7px;width:80px;text-align:center;font-size:10.5px;line-height:11.7px;color:#2e3340;white-space:nowrap">Diagram<br>View</div>
<svg class="r" style="left:1757.3px;top:139px;" width="17.5" height="16" viewBox="0 0 17.5 16"><g fill="none" stroke="#2f3542" stroke-width="1.3" stroke-linecap="round" stroke-linejoin="round"><circle cx="8.7" cy="1.5" r="1.2"/><path d="M8.7 2.7v2.1M3.7 7.5V6.2c0-.8.6-1.4 1.4-1.4h7.2c.8 0 1.4.6 1.4 1.4v1.3"/><circle cx="3.7" cy="8.6" r="1.1"/><circle cx="13.7" cy="8.6" r="1.1"/><path d="M3.7 9.7L1.4 13M3.7 9.7L6 13M13.7 9.7L11.4 13M13.7 9.7L16 13"/><circle cx="1.4" cy="14.3" r="1.2"/><circle cx="6" cy="14.3" r="1.2"/><circle cx="11.4" cy="14.3" r="1.2"/><circle cx="16" cy="14.3" r="1.2"/></g></svg>
<div class="r" style="left:1773.3px;top:164.7px;width:80px;text-align:center;font-size:10.5px;line-height:11.7px;color:#2e3340;white-space:nowrap">Share<br>Widget</div>
<svg class="r" style="left:1805.3px;top:140px;" width="16" height="16" viewBox="0 0 16 16"><g fill="none" stroke="#2f3542" stroke-width="1.6" stroke-linecap="round" stroke-linejoin="round"><path d="M5 7H3.6a1 1 0 0 0-1 1v6a1 1 0 0 0 1 1h8.8a1 1 0 0 0 1-1V8a1 1 0 0 0-1-1H11M8 10V1.2M5 4l3-2.8L11 4"/></g></svg>
<div class="r" style="left:1828.6px;top:164.7px;width:80px;text-align:center;font-size:10.5px;line-height:11.7px;color:#2e3340;white-space:nowrap">View<br>Customi...</div>
<svg class="r" style="left:1860.6px;top:140px;" width="16" height="16" viewBox="0 0 16 16"><g fill="none" stroke="#2f3542" stroke-width="1.2" stroke-linecap="round" stroke-linejoin="round"><rect x="1" y="1" width="11.5" height="11.5" rx="1"/><path d="M1 4.8h11.5M1 8.6h11.5M4.8 1v11.5M8.6 1v11.5"/></g><circle cx="12" cy="12" r="3.6" fill="#fff"/><path d="M12 8.8l.9 1.3 1.6-.3.1 1.6 1.3.9-1 1.2.5 1.5-1.6.3-.8 1.3-1-1.1-1.6.3-.1-1.6-1.3-.9 1-1.2-.5-1.5 1.6-.3z" fill="#2f3542"/><circle cx="12" cy="12" r=".9" fill="#fff"/></svg>
<div class="r" style="left:88.5px;top:208.2px;width:14.5px;height:15px;border:1px solid #d6d9de;border-radius:2px;background:#fff"></div>
<div class="r" style="left:92px;top:213px;width:7px;height:7px;background:#3578c0;"></div>
<div class="t" style="left:298.5px;top:209.4px;font-size:15.4px;font-weight:400;color:#1f2025;">Name</div>
<div class="r" style="left:54px;top:233px;width:620px;height:2px;background:#e3e3e3;"></div>
<div class="r" style="left:584px;top:201px;width:2px;height:203px;background:#dadada;"></div>
<div class="r" style="left:669px;top:201px;width:1px;height:203px;background:#dedede;"></div>
<div class="r" style="left:54px;top:235px;width:620px;height:42px;background:#e5f5fd;"></div>
<div class="r" style="left:54px;top:277px;width:620px;height:1px;background:#d8d8d8;"></div>
<div class="r" style="left:54px;top:319px;width:620px;height:1px;background:#d8d8d8;"></div>
<div class="r" style="left:54px;top:361px;width:620px;height:1px;background:#d8d8d8;"></div>
<div class="r" style="left:54px;top:403px;width:620px;height:1px;background:#d8d8d8;"></div>
<div class="r" style="left:75px;top:263px;width:1px;height:118.5px;background:#9a9a9a;"></div>
<div class="r" style="left:76px;top:296.8px;width:14px;height:0;border-top:1px dashed #9a9a9a"></div>
<div class="r" style="left:76px;top:338.8px;width:14px;height:0;border-top:1px dashed #9a9a9a"></div>
<div class="r" style="left:76px;top:380.8px;width:14px;height:0;border-top:1px dashed #9a9a9a"></div>
<div class="r" style="left:70px;top:249px;width:13.5px;height:14px;background:#1e2d4f;border-radius:3px"></div>
<div class="r" style="left:73.3px;top:253.4px;width:6.6px;height:2.4px;background:#c9d0dc;"></div>
<div class="r" style="left:90px;top:291px;width:13.5px;height:14px;background:#1e2d4f;border-radius:3px"></div>
<div class="r" style="left:92.6px;top:295.3px;width:8.2px;height:2.4px;background:#dfe4ec;"></div>
<div class="r" style="left:95.5px;top:292.6px;width:2.4px;height:7.8px;background:#dfe4ec;"></div>
<div class="r" style="left:90px;top:333px;width:13.5px;height:14px;background:#1e2d4f;border-radius:3px"></div>
<div class="r" style="left:92.6px;top:337.3px;width:8.2px;height:2.4px;background:#dfe4ec;"></div>
<div class="r" style="left:95.5px;top:334.6px;width:2.4px;height:7.8px;background:#dfe4ec;"></div>
<div class="r" style="left:90px;top:375px;width:13.5px;height:14px;background:#1e2d4f;border-radius:3px"></div>
<div class="r" style="left:92.6px;top:379.3px;width:8.2px;height:2.4px;background:#dfe4ec;"></div>
<div class="r" style="left:95.5px;top:376.6px;width:2.4px;height:7.8px;background:#dfe4ec;"></div>
<div class="r" style="left:89.5px;top:248px;width:15px;height:15.5px;border:1px solid #d8dbe0;border-radius:2px;background:#fff"></div>
<svg class="r" style="left:91px;top:250px;" width="12" height="12" viewBox="0 0 12 12"><path d="M2.5 6.3l2.5 2.5 4.8-5" fill="none" stroke="#2f7fd0" stroke-width="1.5" stroke-linecap="round" stroke-linejoin="round"/></svg>
<div class="r" style="left:109.5px;top:290.5px;width:15px;height:15.5px;border:1px solid #d8dbe0;border-radius:2px;background:#fff"></div>
<div class="r" style="left:109.5px;top:332.5px;width:15px;height:15.5px;border:1px solid #d8dbe0;border-radius:2px;background:#fff"></div>
<div class="r" style="left:109.5px;top:374.5px;width:15px;height:15.5px;border:1px solid #d8dbe0;border-radius:2px;background:#fff"></div>
<svg class="r" style="left:115px;top:247px;" width="19" height="19" viewBox="0 0 19 19"><g fill="none" stroke="#3a58b4" stroke-width="1.2" stroke-linejoin="round" stroke-linecap="round"><path d="M9 1.2l6.6 3.5v6.9L9 15.4 2.4 11.6V4.7z"/><path d="M2.6 4.8L9 8.3l6.4-3.5M9 8.3v7"/></g><circle cx="14" cy="14.2" r="4.4" fill="#3a58b4" stroke="#e5f5fd" stroke-width=".8"/><g fill="none" stroke="#e5f5fd" stroke-width="1.1" stroke-linecap="round"><path d="M11.9 13.8a2.2 2.2 0 0 1 3.9-1.1M16.1 14.6a2.2 2.2 0 0 1-3.9 1.1"/></g></svg>
<svg class="r" style="left:135.5px;top:289.5px;" width="18" height="18" viewBox="0 0 18 18"><g fill="none" stroke="#3a58b4" stroke-width="1.6" stroke-linejoin="round"><path d="M9 1l8 3.7v8L9 16.6 1 12.7v-8z"/><path d="M1 4.7l8 3.8 8-3.8M1 8.7l8 3.8 8-3.8"/></g></svg>
<svg class="r" style="left:135.5px;top:373.5px;" width="18" height="18" viewBox="0 0 18 18"><g fill="none" stroke="#3a58b4" stroke-width="1.6" stroke-linejoin="round"><path d="M9 1l8 3.7v8L9 16.6 1 12.7v-8z"/><path d="M1 4.7l8 3.8 8-3.8M1 8.7l8 3.8 8-3.8"/></g></svg>
<svg class="r" style="left:135px;top:331.5px;" width="18" height="18" viewBox="0 0 18 18"><g fill="none" stroke="#3a58b4" stroke-width="1.4" stroke-linecap="round"><path d="M14.8 4.2A7.6 7.6 0 0 0 2.2 6.2M1.4 9.6A7.6 7.6 0 0 0 3.6 14.4"/><path d="M3.2 13.8A7.6 7.6 0 0 0 15.8 11.8M16.6 8.4A7.6 7.6 0 0 0 14.4 3.6"/></g><path d="M1 4.2l3.6.4-1.8 2.6z" fill="#3a58b4"/><path d="M17 13.8l-3.6-.4 1.8-2.6z" fill="#3a58b4"/><g fill="none" stroke="#3a58b4" stroke-width="1.2" stroke-linejoin="round"><path d="M9 4.8l3.8 2.2v4.2L9 13.4 5.2 11.2V7z"/><path d="M5.3 7.1L9 9.2l3.7-2.1M9 9.2v4.1"/></g></svg>
<div class="r" style="left:138.8px;top:0;width:443.7px;height:1040px;overflow:hidden;pointer-events:none">
<div class="t" style="left:0;top:248.0px;font-size:16.5px;color:#3a58b4">Addition of Cable Routing Clips in Drone Harness Subassembly for Improved Cable Retention (A)</div>
</div>
<div class="r" style="left:159px;top:0;width:423.5px;height:1040px;overflow:hidden">
<div class="t" style="left:0;top:332.0px;font-size:16.5px;color:#3a58b4">CO for Addition of Cable Routing Clips in Drone Harness Subassembly</div>
</div>
<div class="t" style="left:159.0px;top:290.0px;font-size:16.5px;font-weight:400;color:#3a58b4;">Drone Harness Subassembly (A) <b style="font-weight:700">(3)</b></div>
<div class="t" style="left:159.0px;top:374.0px;font-size:16.5px;font-weight:400;color:#3a58b4;">Drone Harness Subassembly (B) <b style="font-weight:700">(3)</b></div>
<div class="r" style="left:610px;top:238px;width:34px;height:34px;border-radius:8px;overflow:hidden"><svg width="34" height="34" viewBox="0 0 34 34" style="display:block"><defs><linearGradient id="gdrone" x1="0" y1="0" x2="0" y2="1"><stop offset="0" stop-color="#8c94a1"/><stop offset=".45" stop-color="#bcc1c9"/><stop offset=".62" stop-color="#cfd2d7"/><stop offset="1" stop-color="#e3e5e8"/></linearGradient></defs><rect width="34" height="34" fill="url(#gdrone)"/><path d="M0 24h34v10H0z" fill="#d9dbe0"/><path d="M2 26h12v5H2zM20 27h8v3h-8z" fill="#c4c7cd" opacity=".7"/><path d="M0 13l6-2 8 1 3 4-1 8-7 1-9-1z" fill="#1e1e1e"/><path d="M5 11l8-1 2 3-9 1z" fill="#8a8a8a"/><path d="M2 17h3v2H2zM8 19h4v2H8zM3 22h3v1H3zM12 15h2v2h-2z" fill="#e8e8e8"/><path d="M16 19l17-1v3l-17 1z" fill="#1b1b1b"/><path d="M18 20h12v.8H18z" fill="#c8c8c8"/><path d="M17 13l10 1 3 2-13-1z" fill="#e01a1a"/><path d="M28 16h3v5h-3z" fill="#111"/><path d="M.6 8.5C1 5.5 2.5 3.8 4.5 3" fill="none" stroke="#e01a1a" stroke-width="1.6"/></svg></div>
<div class="r" style="left:610px;top:281.5px;width:34px;height:34px;border-radius:8px;overflow:hidden"><svg width="34" height="34" viewBox="0 0 34 34" style="display:block"><defs><linearGradient id="gcable" x1="0" y1="0" x2="0" y2="1"><stop offset="0" stop-color="#e6e7ef"/><stop offset=".5" stop-color="#f7f7fa"/><stop offset="1" stop-color="#f4f4f7"/></linearGradient></defs><rect width="34" height="34" fill="url(#gcable)"/><path d="M0 21L34 12v6L0 27z" fill="#b9bad9" opacity=".8"/><path d="M0 15L34 6v6L0 21z" fill="#2424b4"/><path d="M0 15L34 6v1.8L0 16.8z" fill="#4c52e6"/><path d="M0 19.4L34 10.4V12L0 21z" fill="#0b0b6e"/></svg></div>
<div class="r" style="left:610px;top:323px;width:34px;height:34px;border-radius:8px;overflow:hidden"><svg width="34" height="34" viewBox="0 0 34 34" style="display:block"><defs><linearGradient id="gdrone2" x1="0" y1="0" x2="0" y2="1"><stop offset="0" stop-color="#8c94a1"/><stop offset=".45" stop-color="#bcc1c9"/><stop offset=".62" stop-color="#cfd2d7"/><stop offset="1" stop-color="#e3e5e8"/></linearGradient></defs><rect width="34" height="34" fill="url(#gdrone2)"/><path d="M0 21h34v13H0z" fill="#d3d6db"/><path d="M0 20h34v1.5H0z" fill="#4a4e55" opacity=".6"/><path d="M2 29h14v1H2z" fill="#c8a0a0" opacity=".6"/><path d="M0 11h8v2H0z" fill="#e01a1a"/><path d="M1 13h4v7H1z" fill="#151515"/><path d="M5 17h12v2H5z" fill="#333"/><path d="M8 16l3 1-2 3z" fill="#eee"/><path d="M15 14h3v5h-3z" fill="#1a1a1a"/><path d="M15 13h3v1h-3z" fill="#d02020"/><path d="M19 12l5-3 10-1v12H19z" fill="#161616"/><path d="M24 8l6-4 4 1v4l-10 1z" fill="#f0f0f0"/><path d="M24 15h3v2h-3zM29 14h3v3h-3zM21 17h2v1h-2z" fill="#e6e6e6"/></svg></div>
<div class="r" style="left:610px;top:364.5px;width:34px;height:34px;border-radius:8px;overflow:hidden"><svg width="34" height="34" viewBox="0 0 34 34" style="display:block"><defs><linearGradient id="gcable2" x1="0" y1="0" x2="0" y2="1"><stop offset="0" stop-color="#e6e7ef"/><stop offset=".5" stop-color="#f7f7fa"/><stop offset="1" stop-color="#f4f4f7"/></linearGradient></defs><rect width="34" height="34" fill="url(#gcable2)"/><path d="M8 27L34 17v9L12 33z" fill="#b7b9dc" opacity=".8"/><path d="M12 13L34 3v11L15 24z" fill="#2626b8"/><path d="M12 13L34 3v2.5L13 15z" fill="#5058ea"/><path d="M14 21L34 11.5v2.5L15 24z" fill="#0d0d75"/><path d="M1 22l6-5 6-2 4 3-1 6-7 3-7-1z" fill="#8d9096"/><path d="M6 18l5-2 3 2-2 4-5 1z" fill="#c9cbcf"/><path d="M9 19h2v2H9z" fill="#a0805a"/><path d="M1 25l8 1-2 4-5-1z" fill="#e5e6e8"/></svg></div>
<div class="r" style="left:656px;top:580px;width:18px;height:35.5px;background:#979ca6;border-radius:5px 0 0 5px"></div>
<svg class="r" style="left:661px;top:591px;" width="8" height="13" viewBox="0 0 8 13"><path d="M1.5 1.2l5 5.3-5 5.3" fill="none" stroke="#fff" stroke-width="1.2"/></svg>
<div class="r" style="left:674px;top:201px;width:1.2px;height:829px;background:#e2e4e9;"></div>
<div class="r" style="left:56px;top:1023px;width:135px;height:7px;background:#7b7b7b;"></div>
<div class="r" style="left:346px;top:1012px;width:35.5px;height:18px;background:#9aa0aa;border-radius:4px 4px 0 0"></div>
<svg class="r" style="left:355px;top:1016px;" width="17" height="10" viewBox="0 0 17 10"><path d="M1.5 8.5L8.5 2l7 6.5" fill="none" stroke="#fff" stroke-width="1.6"/></svg>
<div class="r" style="left:675px;top:200px;width:1234px;height:1px;background:#ececec;"></div>
<div class="r" style="left:675px;top:258px;width:1234px;height:1.2px;background:#e8e8e8;"></div>
<svg class="r" style="left:694.5px;top:212.5px;" width="16" height="16" viewBox="0 0 16 16"><g fill="none" stroke="#5a6478" stroke-width="1.7" stroke-linecap="round" stroke-linejoin="round"><path d="M6 1.8H3.2A1.6 1.6 0 0 0 1.6 3.4v9.4a1.6 1.6 0 0 0 1.6 1.6h9.4a1.6 1.6 0 0 0 1.6-1.6V10"/><path d="M9.5 1.8h4.7v4.7M14 2L8.2 7.8"/></g></svg>
<svg class="r" style="left:714.5px;top:221px;" width="9.2" height="6" viewBox="0 0 9.2 6"><path d="M1 1.2l3.6 3.6L8.2 1.2" fill="none" stroke="#5a6478" stroke-width="1.8" stroke-linecap="round" stroke-linejoin="round"/></svg>
<div class="r" style="left:735.5px;top:205px;width:1px;height:48px;background:#d3d8de;"></div>
<div class="r" style="left:665.0px;top:238.7px;width:80px;text-align:center;font-size:10.5px;line-height:12.1px;color:#2e3340;white-space:nowrap">Open</div>
<div class="r" style="left:721.4px;top:238.7px;width:80px;text-align:center;font-size:10.5px;line-height:12.1px;color:#2e3340;white-space:nowrap">Edit</div>
<svg class="r" style="left:754.1999999999999px;top:212.5px;" width="17" height="17" viewBox="0 0 16 16"><g fill="none" stroke="#5a6478" stroke-width="1.5" stroke-linecap="round" stroke-linejoin="round"><path d="M11.3 1.6l2.9 2.9-8.3 8.3H3v-2.9z"/><path d="M1.5 15.2h13"/></g></svg>
<div class="r" style="left:757.4px;top:238.7px;width:80px;text-align:center;font-size:10.5px;line-height:12.1px;color:#b3b7bf;white-space:nowrap">Save</div>
<svg class="r" style="left:790.1999999999999px;top:212.5px;" width="17" height="17" viewBox="0 0 16 16"><g fill="none" stroke="#b9bdc6" stroke-width="1.5" stroke-linecap="round" stroke-linejoin="round"><path d="M2.5 2.5h9l2.5 2.5v8.5a1 1 0 0 1-1 1H3.5a1 1 0 0 1-1-1z"/><path d="M5 2.5v3.5h5.5V2.5"/></g><circle cx="8.2" cy="10.2" r="1.8" fill="#b9bdc6"/></svg>
<div class="r" style="left:796.4px;top:238.7px;width:80px;text-align:center;font-size:10.5px;line-height:12.1px;color:#2e3340;white-space:nowrap">Promote</div>
<svg class="r" style="left:829.1999999999999px;top:212.5px;" width="17" height="17" viewBox="0 0 16 16"><g fill="none" stroke="#5a6478" stroke-width="1.6" stroke-linecap="round" stroke-linejoin="round"><path d="M8 12V1.5M4.8 4.7L8 1.5l3.2 3.2M1.5 8.8h3M11.5 8.8h3M1.5 14h13"/></g></svg>
<div class="r" style="left:837.7px;top:238.7px;width:80px;text-align:center;font-size:10.5px;line-height:12.1px;color:#2e3340;white-space:nowrap">Demote</div>
<svg class="r" style="left:870.5px;top:212.5px;" width="17" height="17" viewBox="0 0 16 16"><g fill="none" stroke="#5a6478" stroke-width="1.6" stroke-linecap="round" stroke-linejoin="round"><path d="M8 4.5V15M4.8 11.8L8 15l3.2-3.2M1.5 7.2h3M11.5 7.2h3M1.5 2h13"/></g></svg>
<div class="r" style="left:877.0px;top:238.7px;width:80px;text-align:center;font-size:10.5px;line-height:12.1px;color:#2e3340;white-space:nowrap">Finalize</div>
<svg class="r" style="left:909.8px;top:212.5px;" width="17" height="17" viewBox="0 0 16 16"><g fill="none" stroke="#5a6478" stroke-width="1.3" stroke-linecap="round" stroke-linejoin="round"><path d="M2 15V2.5c2-1.3 4-1.3 6 0s4 1.3 6 0v8.5c-2 1.3-4 1.3-6 0s-4-1.3-6 0"/><path d="M5 1.6v10M8 2.5v8.5M11 3.4v8.5M2 6.6c2-1.3 4-1.3 6 0s4 1.3 6 0"/></g></svg>
<div class="r" style="left:913.7px;top:238.7px;width:80px;text-align:center;font-size:10.5px;line-height:12.1px;color:#2e3340;white-space:nowrap">Revise</div>
<svg class="r" style="left:946.5px;top:212.5px;" width="17" height="17" viewBox="0 0 16 16"><g fill="none" stroke="#5a6478" stroke-width="1.6" stroke-linecap="round" stroke-linejoin="round"><path d="M1.2 5.5V1.5h4M1.4 1.7L6.6 7.2M7.4 14.6V10.2C7.4 6 10 3.6 14.4 1.7M10.6 1.5h4.1v4"/></g></svg>
<div class="r" style="left:951.8px;top:238.7px;width:80px;text-align:center;font-size:10.5px;line-height:12.1px;color:#2e3340;white-space:nowrap">Refresh</div>
<svg class="r" style="left:984.5999999999999px;top:212.5px;" width="17" height="17" viewBox="0 0 16 16"><g fill="none" stroke="#5a6478" stroke-width="1.6" stroke-linecap="round" stroke-linejoin="round"><path d="M14 8A6 6 0 1 1 11.5 3.1"/><path d="M12 .8v3h-3"/></g></svg>
<svg class="r" style="left:1874.5px;top:212.5px;" width="15" height="15" viewBox="0 0 16 16"><g fill="none" stroke="#3f4452" stroke-width="1.4" stroke-linecap="round" stroke-linejoin="round"><rect x="1.5" y="1.5" width="13" height="13" rx="1.5"/><path d="M5.8 1.5v13M10.2 1.5v13"/></g></svg>
<div class="r" style="left:1842.0px;top:236.8px;width:80px;text-align:center;font-size:10.5px;line-height:12.1px;color:#3f4452;white-space:nowrap">Views</div>
<div class="r" style="left:680px;top:271px;width:34px;height:22px;overflow:hidden"><svg width="34" height="22" viewBox="0 0 34 22" style="display:block"><defs><linearGradient id="gdt" x1="0" y1="0" x2="0" y2="1"><stop offset="0" stop-color="#7d848f"/><stop offset=".5" stop-color="#a8adb5"/><stop offset="1" stop-color="#c9ccd1"/></linearGradient></defs><rect width="34" height="22" fill="url(#gdt)"/><path d="M0 16h34v6H0z" fill="#bfc2c8"/><path d="M6 10l5-2 6 1 3 3-1 4-6 1-7-1z" fill="#1e1e1e"/><path d="M9 11h2v1H9zM13 13h3v1h-3z" fill="#ddd"/><path d="M19 12l11-1v1.6l-11 1z" fill="#1b1b1b"/><path d="M19 8.5l9 1.2 2.5 1.5-11.5-1z" fill="#e01a1a"/><path d="M4 8l2.5-4.5 1 .6L5 8.6z" fill="#e01a1a"/><path d="M27 11h2.5v4H27z" fill="#111"/><path d="M8 17h16" stroke="#666" stroke-width=".6"/></svg></div>
<svg class="r" style="left:724.5px;top:274.5px;" width="18" height="18" viewBox="0 0 19 19"><g fill="none" stroke="#4a64c0" stroke-width="1.2" stroke-linejoin="round" stroke-linecap="round"><path d="M9 1.2l6.6 3.5v6.9L9 15.4 2.4 11.6V4.7z"/><path d="M2.6 4.8L9 8.3l6.4-3.5M9 8.3v7"/></g><circle cx="14" cy="14.2" r="4.4" fill="#4a64c0" stroke="#fff" stroke-width=".8"/><g fill="none" stroke="#fff" stroke-width="1.1" stroke-linecap="round"><path d="M11.9 13.8a2.2 2.2 0 0 1 3.9-1.1M16.1 14.6a2.2 2.2 0 0 1-3.9 1.1"/></g></svg>
<div class="t" style="left:747.7px;top:274.6px;font-size:16.6px;font-weight:400;color:#4762c0;">Addition of Cable Routing Clips in Drone Harness Subassembly for Improved Cable Retention (A)</div>
<svg class="r" style="left:1881px;top:275px;" width="14" height="9" viewBox="0 0 14 9"><path d="M1.2 7.8L7 2l5.8 5.8" fill="none" stroke="#25272e" stroke-width="1.8" stroke-linecap="round" stroke-linejoin="round"/></svg>
<div class="r" style="left:675px;top:304px;width:1234px;height:48px;background:#f2f3f5;"></div>
<div class="r" style="left:675px;top:351.5px;width:1234px;height:2px;background:#dcdcec;"></div>
<div class="r" style="left:1755px;top:315px;width:106px;height:26px;background:#fff;border-radius:3px 3px 0 0"></div>
<div class="r" style="left:1755px;top:349px;width:106px;height:2.5px;background:#0f2c6a;"></div>
<div class="t" style="left:752.0px;top:321.5px;font-size:13.6px;font-weight:700;color:#474a52;">Information</div>
<svg class="r" style="left:732.5px;top:321px;" width="14" height="14" viewBox="0 0 14 14"><g fill="none" stroke="#55585f" stroke-width="1.3"><circle cx="7" cy="7" r="6"/><path d="M7 6v4.2"/></g><circle cx="7" cy="3.9" r=".9" fill="#55585f"/></svg>
<div class="t" style="left:966.0px;top:321.5px;font-size:13.6px;font-weight:700;color:#474a52;">Relations</div>
<svg class="r" style="left:940px;top:321px;" width="14" height="14" viewBox="0 0 14 14"><g fill="none" stroke="#55585f" stroke-width="1.4" stroke-linecap="round"><path d="M5.5 3.5H4a3.5 3.5 0 0 0 0 7h1.5M8.5 3.5H10a3.5 3.5 0 0 1 0 7H8.5M4.5 7h5"/></g></svg>
<div class="t" style="left:1166.0px;top:321.5px;font-size:13.6px;font-weight:700;color:#474a52;">Lifecycle</div>
<svg class="r" style="left:1140px;top:321px;" width="14" height="14" viewBox="0 0 14 14"><g fill="none" stroke="#55585f" stroke-width="1.3" stroke-linecap="round"><path d="M2 6a5.2 5.2 0 0 1 9-2.6M12 8a5.2 5.2 0 0 1-9 2.6"/><path d="M11.2 1v2.6H8.6M2.8 13v-2.6h2.6"/><path d="M1.6 8.4v.1M12.4 5.6v.1" stroke-width="1.6"/></g></svg>
<div class="t" style="left:1370.0px;top:321.5px;font-size:13.6px;font-weight:700;color:#474a52;">History</div>
<svg class="r" style="left:1344px;top:321px;" width="14" height="14" viewBox="0 0 14 14"><g fill="none" stroke="#55585f" stroke-width="1.3" stroke-linecap="round"><path d="M2.2 5A5.5 5.5 0 1 1 1.5 7.5"/><path d="M1.8 2.2v3h3M7 4.5V7.5l2 1.5"/></g></svg>
<div class="t" style="left:1562.0px;top:321.5px;font-size:13.6px;font-weight:700;color:#474a52;">Collaboration</div>
<svg class="r" style="left:1536px;top:321px;" width="14" height="14" viewBox="0 0 14 14"><g fill="none" stroke="#55585f" stroke-width="1.3" stroke-linecap="round"><circle cx="5" cy="4.5" r="2.5"/><path d="M1 12.5c0-2.4 1.8-4 4-4s4 1.6 4 4M9.5 2.2a2.4 2.4 0 0 1 0 4.6M11 8.8c1.3.5 2.2 1.8 2.2 3.7"/></g></svg>
<div class="t" style="left:1790.5px;top:321.5px;font-size:13.6px;font-weight:700;color:#0f2c6a;">Summary</div>
<svg class="r" style="left:1764.5px;top:321px;" width="14" height="14" viewBox="0 0 14 14"><g fill="none" stroke="#0f2c6a" stroke-width="1.4" stroke-linejoin="round"><path d="M2 1.5h7l3 3v8.5H2z"/><path d="M5 1.5v11.5"/></g></svg>
<div class="r" style="left:675px;top:353.5px;width:1234px;height:48.5px;background:#f3f4f6;"></div>
<div class="r" style="left:678px;top:358px;width:1101.5px;height:39.5px;border:1.5px solid #e2e3e6;border-radius:7px;background:#fff"></div>
<div class="t" style="left:689.6px;top:371.0px;font-size:15.1px;font-weight:400;color:#26272b;">Change Request Summary</div>
<svg class="r" style="left:1754.5px;top:375px;" width="10" height="6" viewBox="0 0 10 6"><path d="M0 0h10L5 5.5z" fill="#2a2c33"/></svg>
<div class="r" style="left:1793px;top:361.5px;width:113px;height:33px;background:#0f2d6b;border-radius:8px"></div>
<svg class="r" style="left:1817.5px;top:369px;" width="19" height="18" viewBox="0 0 18 18"><g fill="none" stroke="#fff" stroke-width="1.7" stroke-linejoin="round"><path d="M4.5 5.5V1.5h9v4M4.5 13H2a1 1 0 0 1-1-1V7a1.5 1.5 0 0 1 1.5-1.5h13A1.5 1.5 0 0 1 17 7v5a1 1 0 0 1-1 1h-2.5"/><path d="M4.5 10h9v6.5h-9z"/></g></svg>
<div class="t" style="left:1846.5px;top:370.0px;font-size:15.4px;font-weight:700;color:#fff;">Print</div>
<div class="r" style="left:675px;top:401.5px;width:1234px;height:1.5px;background:#e4e4e6;"></div>
<div class="r" style="left:675px;top:403px;width:1234px;height:627px;overflow:hidden">
<div class="t" style="left:23.0px;top:2.5px;font-size:22.45px;font-weight:700;color:#000;">Summary Report: Addition of Cable Routing Clips in Drone Harness Subassembly for Improved Cable</div>
<div class="t" style="left:23.0px;top:34.2px;font-size:22.45px;font-weight:700;color:#000;">Retention</div>
<div class="t" style="left:23.0px;top:83.8px;font-size:18px;font-weight:700;color:#000;">Attributes</div>
<div class="r" style="left:23.0px;top:110.2px;width:1167px;height:2.2px;background:#111"></div>
<div class="t" style="left:23.0px;top:350.6px;font-size:18px;font-weight:700;color:#000;">Lifecycle</div>
<div class="r" style="left:23.0px;top:376.3px;width:1167px;height:2.2px;background:#111"></div>
<div class="t" style="left:23.0px;top:479.2px;font-size:18px;font-weight:700;color:#000;">Change Metadata</div>
<div class="r" style="left:23.0px;top:506.2px;width:1167px;height:2.2px;background:#111"></div>
<div class="r" style="left:23.0px;top:175.0px;width:570px;height:1px;background:#e8e8e8"></div>
<div class="r" style="left:23.0px;top:227.4px;width:570px;height:1px;background:#e8e8e8"></div>
<div class="r" style="left:23.0px;top:258.4px;width:570px;height:1px;background:#e8e8e8"></div>
<div class="r" style="left:23.0px;top:290.0px;width:570px;height:1px;background:#e8e8e8"></div>
<div class="r" style="left:23.0px;top:321.0px;width:570px;height:1px;background:#e8e8e8"></div>
<div class="r" style="left:617.5px;top:172.8px;width:572.5px;height:1px;background:#e8e8e8"></div>
<div class="r" style="left:617.5px;top:222.6px;width:572.5px;height:1px;background:#e8e8e8"></div>
<div class="r" style="left:617.5px;top:271.7px;width:572.5px;height:1px;background:#e8e8e8"></div>
<div class="r" style="left:617.5px;top:321.5px;width:572.5px;height:1px;background:#e8e8e8"></div>
<div class="r" style="left:23.0px;top:420.5px;width:570px;height:1px;background:#e8e8e8"></div>
<div class="r" style="left:23.0px;top:451.4px;width:570px;height:1px;background:#e8e8e8"></div>
<div class="r" style="left:617.5px;top:420.2px;width:572.5px;height:1px;background:#e8e8e8"></div>
<div class="r" style="left:617.5px;top:451.2px;width:572.5px;height:1px;background:#e8e8e8"></div>
<div class="r" style="left:23.0px;top:570.0px;width:570px;height:1px;background:#e8e8e8"></div>
<div class="r" style="left:23.0px;top:623.3px;width:570px;height:1px;background:#e8e8e8"></div>
<div class="r" style="left:617.5px;top:571.0px;width:572.5px;height:1px;background:#e8e8e8"></div>
<div class="t" style="left:29.0px;top:130.9px;font-size:14.56px;font-weight:700;color:#0b0b0b;">Name:</div>
<div class="t" style="left:223.0px;top:130.9px;font-size:14.56px;font-weight:400;color:#2b2b2b;">Addition of Cable Routing Clips in Drone Harness</div>
<div class="t" style="left:223.0px;top:151.9px;font-size:14.56px;font-weight:400;color:#2b2b2b;">Subassembly for Improved Cable Retention</div>
<div class="t" style="left:29.0px;top:182.7px;font-size:14.56px;font-weight:700;color:#0b0b0b;">Description:</div>
<div class="t" style="left:223.0px;top:182.7px;font-size:14.56px;font-weight:400;color:#2b2b2b;">Addition of Cable Routing Clips in Drone Harness</div>
<div class="t" style="left:223.0px;top:203.7px;font-size:14.56px;font-weight:400;color:#2b2b2b;">Subassembly for Improved Cable Retention</div>
<div class="t" style="left:29.0px;top:235.9px;font-size:14.56px;font-weight:700;color:#0b0b0b;">Owner:</div>
<div class="t" style="left:223.0px;top:235.9px;font-size:14.56px;font-weight:400;color:#2b2b2b;">plm noraengineer</div>
<div class="t" style="left:29.0px;top:266.4px;font-size:14.56px;font-weight:700;color:#0b0b0b;">Creator:</div>
<div class="t" style="left:29.0px;top:297.4px;font-size:14.56px;font-weight:700;color:#0b0b0b;">Created At:</div>
<div class="t" style="left:223.0px;top:297.4px;font-size:14.56px;font-weight:400;color:#2b2b2b;">2025-11-12 05:51:41</div>
<div class="t" style="left:29.0px;top:396.9px;font-size:14.56px;font-weight:700;color:#0b0b0b;">Lifecycle:</div>
<div class="t" style="left:223.0px;top:396.9px;font-size:14.56px;font-weight:400;color:#2b2b2b;">Change Default</div>
<div class="t" style="left:29.0px;top:427.7px;font-size:14.56px;font-weight:700;color:#0b0b0b;">State:</div>
<div class="t" style="left:223.0px;top:427.7px;font-size:14.56px;font-weight:400;color:#2b2b2b;">Completed</div>
<div class="t" style="left:29.0px;top:526.9px;font-size:14.56px;font-weight:700;color:#0b0b0b;">Change Request ID:</div>
<div class="t" style="left:223.0px;top:526.9px;font-size:14.56px;font-weight:400;color:#2b2b2b;">CR-000185</div>
<div class="t" style="left:29.0px;top:578.9px;font-size:14.56px;font-weight:700;color:#0b0b0b;">Change Category:</div>
<div class="t" style="left:223.0px;top:578.9px;font-size:14.56px;font-weight:400;color:#2b2b2b;">Facilitate Manufacturing</div>
<div class="t" style="left:625.5px;top:131.1px;font-size:14.56px;font-weight:700;color:#0b0b0b;">Revision:</div>
<div class="t" style="left:819.0px;top:131.1px;font-size:14.56px;font-weight:400;color:#2b2b2b;">A</div>
<div class="t" style="left:625.5px;top:180.4px;font-size:14.56px;font-weight:700;color:#0b0b0b;">Type:</div>
<div class="t" style="left:819.0px;top:180.4px;font-size:14.56px;font-weight:400;color:#2b2b2b;">Change Request</div>
<div class="t" style="left:625.5px;top:230.2px;font-size:14.56px;font-weight:700;color:#0b0b0b;">Workspace:</div>
<div class="t" style="left:819.0px;top:230.2px;font-size:14.56px;font-weight:400;color:#2b2b2b;">Default</div>
<div class="t" style="left:625.5px;top:280.0px;font-size:14.56px;font-weight:700;color:#0b0b0b;">Updated At:</div>
<div class="t" style="left:819.0px;top:280.0px;font-size:14.56px;font-weight:400;color:#2b2b2b;">2025-11-19 13:33:42</div>
<div class="t" style="left:625.5px;top:396.5px;font-size:14.56px;font-weight:700;color:#0b0b0b;">Is Final:</div>
<div class="t" style="left:819.0px;top:396.5px;font-size:14.56px;font-weight:400;color:#2b2b2b;">True</div>
<div class="t" style="left:625.5px;top:427.3px;font-size:14.56px;font-weight:700;color:#0b0b0b;">Finalized At:</div>
<div class="t" style="left:819.0px;top:427.3px;font-size:14.56px;font-weight:400;color:#2b2b2b;">2025-11-13 09:39:27</div>
<div class="t" style="left:625.5px;top:526.3px;font-size:14.56px;font-weight:700;color:#0b0b0b;">Change Reason:</div>
<div class="t" style="left:819.0px;top:526.3px;font-size:14.56px;font-weight:400;color:#2b2b2b;">Addition of Cable Routing Clips in Drone Harness</div>
<div class="t" style="left:819.0px;top:547.3px;font-size:14.56px;font-weight:400;color:#2b2b2b;">Subassembly for Improved Cable Retention</div>
<div class="t" style="left:625.5px;top:578.5px;font-size:14.56px;font-weight:700;color:#0b0b0b;">Change Summary:</div>
<div class="t" style="left:819.0px;top:578.5px;font-size:14.56px;font-weight:400;color:#2b2b2b;">The harness bundle in the Drone Harness Subassembly</div>
<div class="t" style="left:819.0px;top:599.5px;font-size:14.56px;font-weight:400;color:#2b2b2b;">is not adequately secured, causing slight movement and</div>
<div class="t" style="left:819.0px;top:620.5px;font-size:14.56px;font-weight:400;color:#2b2b2b;">misalignment during assembly and operation. This may</div>
<div class="r" style="left:1212.0px;top:0.0px;width:18px;height:627px;background:#fafafa"></div>
<div class="r" style="left:1230.0px;top:0.0px;width:1.5px;height:627px;background:#e6e6e6"></div>
<svg class="r" style="left:1214.5px;top:5.5px" width="14" height="11" viewBox="0 0 14 11"><path d="M7 .8l6.2 9.6H.8z" fill="#9a9a9a"/></svg>
<div class="r" style="left:1216px;top:28.5px;width:11px;height:173.5px;background:#8d8d8d;border-radius:6px"></div>
<svg class="r" style="left:1214.5px;top:612.5px" width="14" height="11" viewBox="0 0 14 11"><path d="M.8 .8h12.4L7 10.2z" fill="#8d8d8d"/></svg>
</div>
<div class="r" style="left:53px;top:94px;width:1857px;height:937px;border:1px solid #064a97;border-radius:7px 7px 6px 6px;pointer-events:none"></div>
<div class="r" style="left:1913px;top:94px;width:5px;height:940px;background:#9a9a9a;border-radius:3px"></div>
<div class="r" style="left:0px;top:1034.5px;width:1919px;height:1.2px;background:#c8c8c8;"></div>
<div class="r" style="left:0px;top:1035.7px;width:1919px;height:5px;background:#dcdee3;"></div>
<div class="r" style="left:491.5px;top:985px;width:208.5px;height:41.5px;background:#e0303f;border-radius:7px"></div>
<div class="t" style="left:516.3px;top:996.5px;font-size:16.5px;font-weight:400;color:#fff;">1 Object Selected</div>
<svg class="r" style="left:661.5px;top:1000px;" width="12" height="12" viewBox="0 0 12 12"><path d="M1 1l10 10M11 1L1 11" fill="none" stroke="#fff" stroke-width="1.5"/></svg>
</body></html>
